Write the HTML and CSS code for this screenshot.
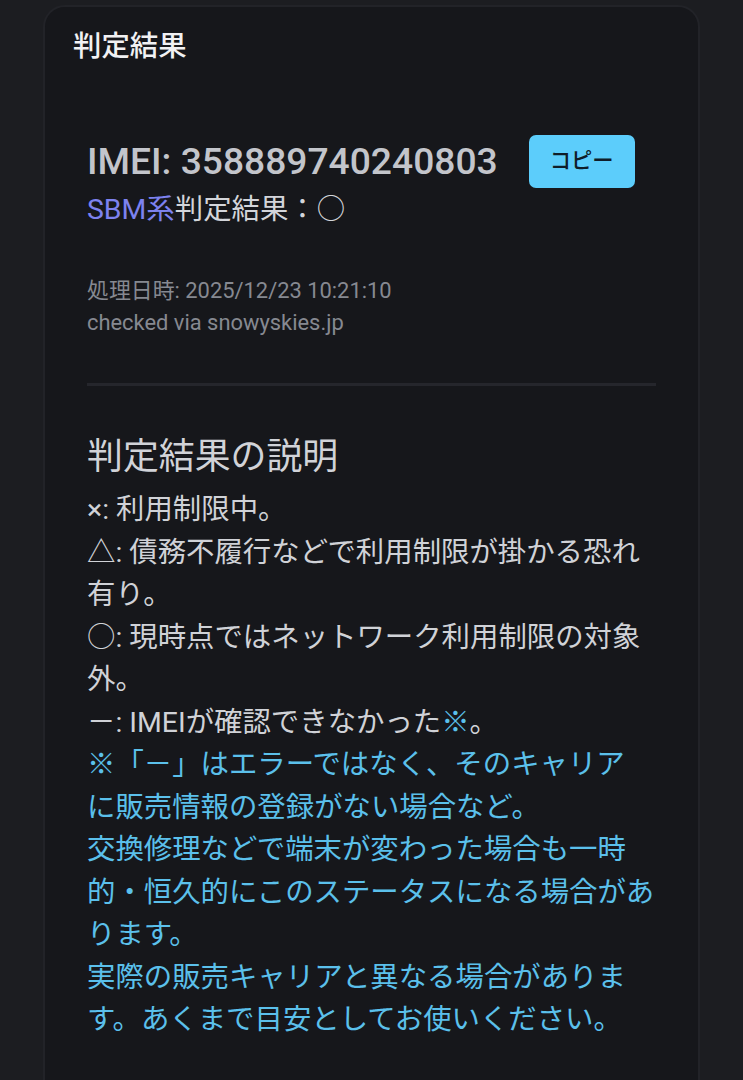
FILE: index.html
```html
<!DOCTYPE html>
<html lang="ja">
<head>
<meta charset="utf-8">
<title>判定結果</title>
<link rel="stylesheet" href="styles.css">
</head>
<body>
<div class="card">
  <h2 class="title">判定結果</h2>
  <div class="result">
    <div class="imei-row">
      <div class="imei">IMEI: 358889740240803</div>
      <button class="copy" type="button">コピー</button>
    </div>
    <div class="verdict"><span class="carrier">SBM系</span>判定結果：○</div>
    <div class="meta">
      <div>処理日時: 2025/12/23 10:21:10</div>
      <div>checked via snowyskies.jp</div>
    </div>
    <div class="divider"></div>
    <h3 class="explain-title">判定結果の説明</h3>
    <div class="explain">
      <p>×: 利用制限中。</p>
      <p>△: 債務不履行などで利用制限が掛かる恐れ有り。</p>
      <p>○: 現時点ではネットワーク利用制限の対象外。</p>
      <p>－: IMEIが確認できなかった<span class="note-mark">※</span>。</p>
      <p class="note">※「－」はエラーではなく、そのキャリア<br>に販売情報の登録がない場合など。<br>交換修理などで端末が変わった場合も一時的・恒久的にこのステータスになる場合があります。<br>実際の販売キャリアと異なる場合がありま<br>す。あくまで目安としてお使いください。</p>
    </div>
  </div>
</div>
</body>
</html>
```

FILE: styles.css
```css
* {
  box-sizing: border-box;
}

html, body {
  margin: 0;
  background: #1c1d21;
}

body {
  padding: 5px 43px 0;
  font-family: Roboto, "Noto Sans CJK JP", sans-serif;
  height: 1080px;
  overflow: hidden;
}

.card {
  background: #16171b;
  border: 2px solid #222328;
  border-radius: 22px;
  padding: 19px 28px 60px;
  min-height: 1120px;
}

.title {
  margin: 0;
  font-size: 28.4px;
  line-height: 42.6px;
  font-weight: 500;
  color: #f1f1f3;
}

.result {
  margin-top: 66px;
  padding: 0 14px;
}

.imei-row {
  display: flex;
  align-items: center;
  gap: 31px;
}

.imei {
  font-size: 37.2px;
  font-weight: 500;
  line-height: 1.2;
  color: #c3c5cb;
  white-space: nowrap;
}

.copy {
  font-family: Roboto, "Noto Sans CJK JP", sans-serif;
  background: #5ccdfb;
  color: #0f1d29;
  font-size: 21.3px;
  line-height: 32px;
  padding: 10.5px 21px;
  border: none;
  border-radius: 7px;
  font-weight: 500;
}

.verdict {
  margin-top: 1px;
  font-size: 28.4px;
  line-height: 42.6px;
  color: #d3d5da;
}

.carrier {
  color: #7d82ef;
}

.meta {
  margin-top: 44px;
  font-size: 21.9px;
  line-height: 32px;
  color: #868991;
}

.divider {
  margin-top: 44px;
  height: 3px;
  background: #25262c;
}

.explain-title {
  margin: 44px 0 0;
  font-size: 35.9px;
  line-height: 54px;
  font-weight: 400;
  color: #d1d3d8;
}

.explain {
  margin-top: 5px;
  font-size: 28.4px;
  line-height: 42.5px;
  color: #d0d2d7;
}

.explain p {
  margin: 0;
}

.note,
.note-mark {
  color: #5bc0eb;
}
```
